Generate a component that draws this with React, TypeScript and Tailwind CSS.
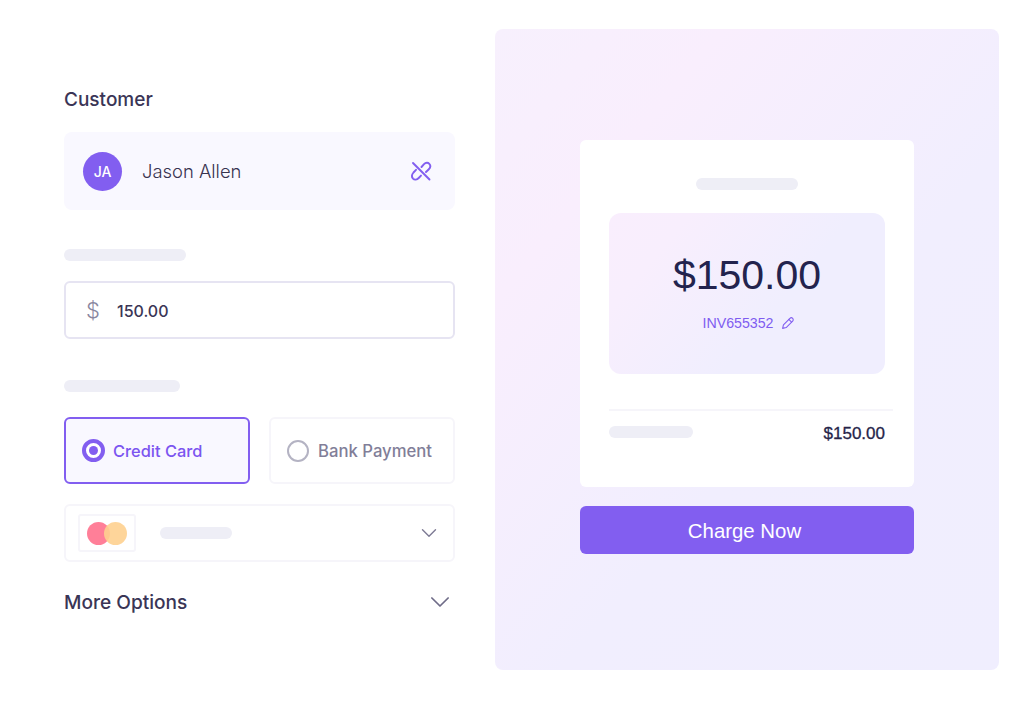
import React from "react";

const Bar = ({ className }: { className: string }) => (
  <div className={`rounded-full bg-[#eeeef6] ${className}`} />
);

const Chevron = ({ size, color }: { size: number; color: string }) => (
  <svg width={size} height={size} viewBox="0 0 16 16" fill="none" stroke={color} strokeWidth="1.4" strokeLinecap="round" strokeLinejoin="round">
    <path d="M1.5 4.8 L8 11.2 L14.5 4.8" />
  </svg>
);

export default function App() {
  return (
    <div className="flex h-[701px] w-[1024px] overflow-hidden bg-white pl-[64px] pt-[29px] font-['Inter',sans-serif]">
      <div className="flex w-[391px] flex-col">
        <div className="mt-[59px] h-[24px] text-[19px] font-medium leading-[24px] text-[#3a3556]">Customer</div>
        <div className="mt-[20px] flex h-[78px] items-center rounded-lg bg-[#f9f8ff] pl-[19px] pr-[22px]">
          <div className="flex h-[39px] w-[39px] items-center justify-center rounded-full bg-[#825ef0] text-[14px] font-medium text-white">JA</div>
          <div className="ml-[20px] pt-[1px] text-[18.4px] font-light text-[#38334f]">Jason Allen</div>
          <svg className="ml-auto" width="24" height="24" viewBox="0 0 24 24" fill="none" stroke="#825ef0" strokeWidth="1.9" strokeLinecap="round" strokeLinejoin="round">
            <path d="M4 4 L20.5 20.5" />
            <path d="M12.5 8 L15 5.2 C16.8 3.4 19 3.4 20.3 4.8 C21.8 6.4 21.3 8.8 19.6 10.5 L17 13" />
            <path d="M7 10.8 L4.5 13.5 C2.8 15.5 2.6 18 4 19.6 C5.5 21.2 8 20.8 9.7 19 L12 16.6" />
          </svg>
        </div>
        <Bar className="mt-[39px] h-[12px] w-[122px]" />
        <div className="mt-[20px] flex h-[58px] items-center rounded-md border-2 border-[#e6e4f2] bg-white pl-[20px]">
          <span className="w-[31px] text-[22px] font-light leading-[24px] text-[#8a87a0]">$</span>
          <span className="pt-[1px] text-[16px] font-medium text-[#3a3556]">150.00</span>
        </div>
        <Bar className="mt-[41px] h-[12px] w-[116px]" />
        <div className="mt-[25px] flex justify-between">
          <div className="flex h-[67px] w-[186px] items-center rounded-md border-2 border-[#825ef0] bg-[#f9f8ff] pl-[16px]">
            <div className="flex h-[23px] w-[23px] items-center justify-center rounded-full border-[4px] border-[#825ef0] bg-white">
              <div className="h-[9px] w-[9px] rounded-full bg-[#825ef0]" />
            </div>
            <span className="ml-[8px] pt-[2px] text-[16.4px] font-medium text-[#7c55f0]">Credit Card</span>
          </div>
          <div className="flex h-[67px] w-[186px] items-center rounded-md border-2 border-[#f6f5fa] bg-white pl-[16px]">
            <div className="h-[22px] w-[22px] rounded-full border-[2.5px] border-[#b4b3c3]" />
            <span className="ml-[9px] pt-[2px] text-[16.7px] font-medium text-[#817e98]">Bank Payment</span>
          </div>
        </div>
        <div className="mt-[20px] flex h-[58px] items-center rounded-md border-2 border-[#f6f5fa] bg-white pl-[12px] pr-[16px]">
          <div className="flex h-[38px] w-[58px] items-center justify-center rounded-[3px] border-2 border-[#f6f5fa]">
            <div className="relative h-[23px] w-[40px]">
              <div className="absolute left-0 top-0 h-[23px] w-[23px] rounded-full bg-[#ff7f98]" />
              <div className="absolute right-0 top-0 h-[23px] w-[23px] rounded-full bg-[#fed08f] opacity-90" />
            </div>
          </div>
          <Bar className="ml-[24px] h-[12px] w-[72px]" />
          <div className="ml-auto">
            <Chevron size={16} color="#7d7a94" />
          </div>
        </div>
        <div className="mt-[25px] flex h-[30px] items-center justify-between pr-[5px]">
          <span className="text-[19.1px] font-medium text-[#3a3556]">More Options</span>
          <Chevron size={20} color="#6f6c88" />
        </div>
      </div>

      <div className="ml-[40px] flex h-[641px] w-[504px] flex-col items-center rounded-lg bg-[linear-gradient(130deg,#f7f0fd_0%,#f9eefd_22%,#f1eefe_58%,#f0eefe_100%)] pt-[111px]">
        <div className="flex h-[347px] w-[334px] flex-col rounded-md bg-white pl-[29px] font-['Liberation_Sans',sans-serif]">
          <Bar className="ml-[87px] mt-[38px] h-[12px] w-[102px]" />
          <div className="mt-[23px] flex h-[161px] w-[276px] flex-col items-center rounded-xl bg-[linear-gradient(130deg,#f9eefd_0%,#f8eefd_20%,#f0eefe_60%,#f0eefe_100%)] pt-[36px]">
            <div className="text-[41px] leading-[52px] text-[#23234e]">$150.00</div>
            <div className="ml-[2px] mt-[12px] flex items-center text-[14.2px] leading-[20px] text-[#7f5cf0]">
              INV655352
              <svg className="ml-[7px]" width="13" height="13" viewBox="0 0 24 24" fill="none" stroke="#825ef0" strokeWidth="2" strokeLinecap="round" strokeLinejoin="round">
                <path d="M3 21 L4.5 14.5 L16.5 2.5 a2.8 2.8 0 0 1 5 5 L9.5 19.5 Z" />
                <path d="M14.5 4.5 L19.5 9.5" />
              </svg>
            </div>
          </div>
          <div className="mt-[35px] h-[2px] w-[284px] bg-[#f6f5fa]" />
          <div className="mt-[7px] flex w-[276px] items-center justify-between">
            <Bar className="h-[12px] w-[84px]" />
            <span className="pt-[3px] text-[17px] font-normal text-[#262449] [-webkit-text-stroke:0.3px_#262449]">$150.00</span>
          </div>
        </div>
        <div className="mt-[19px] flex h-[48px] w-[334px] items-center justify-center rounded-md bg-[#825ef0] pr-[5px] pt-[3px] font-['Liberation_Sans',sans-serif] text-[20.4px] text-white">
          Charge Now
        </div>
      </div>
    </div>
  );
}
